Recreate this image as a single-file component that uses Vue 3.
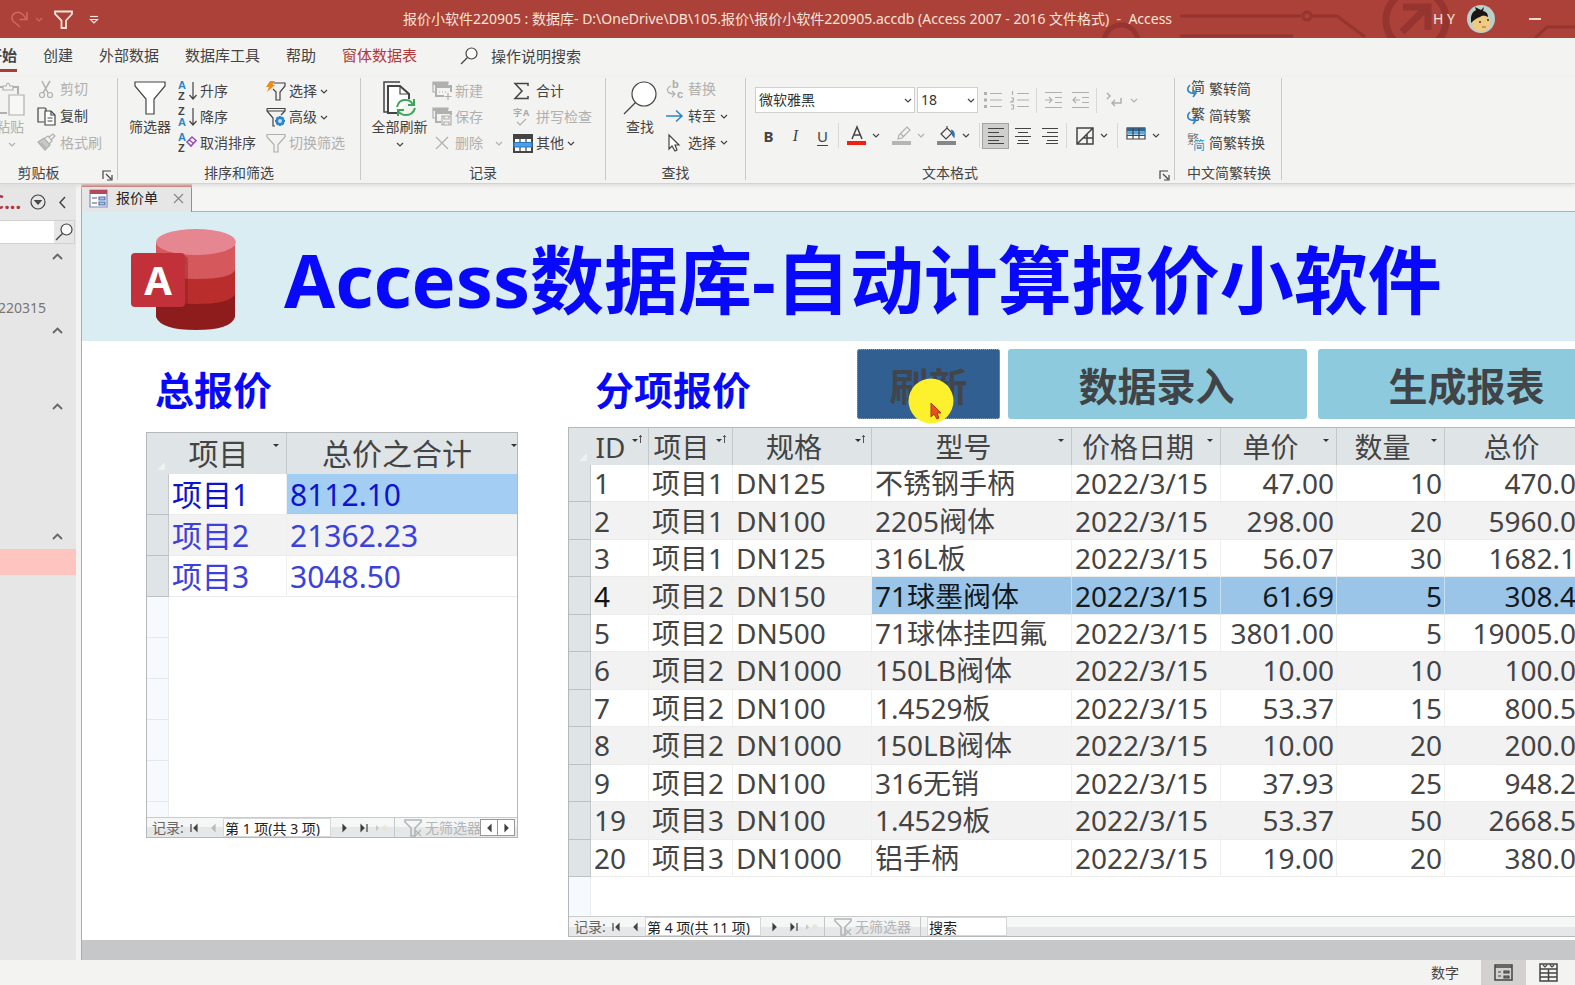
<script setup>
import { h } from 'vue'

const art = {
  redoArrow: '<path d="M9 17 L2 11 Q-1 6 4 3 Q10 0 15 9 M16 2 V9.500 H8.500" stroke-width="1.500"/>',
  funnel: '<path d="M1 1.500 H19 V4 L12 11.500 V19 H8 V11.500 L1 4 Z" />',
  quickFunnel: '<path d="M1 1.500 H18 V4 L12 10.500 V18 H7.500 V10.500 L1 4 Z" stroke-width="1.800"/>',
  more: '<path d="M1 1.500 H9" /><path d="M1.500 4.500 L5 8 L8.500 4.500 Z" />',
  chevron: '<path d="M1 1 L4 4 L7 1" />',
  caretUp: '<path d="M1 6 L5.500 1.500 L10 6" stroke-width="1.800"/>',
  back: '<path d="M6 1 L1 6.500 L6 12" stroke-width="1.500"/>',
  circleDown: '<circle cx="8" cy="8" r="7" fill="none"/><path d="M5 6.500 H11 L8 10 Z" fill="#555"/>',
  search: '<circle cx="11.500" cy="6.500" r="5.500" fill="#fafafa"/><path d="M7.500 10.500 L1 17"/>',
  bigSearch: '<circle cx="21" cy="13" r="12" fill="#fff"/><path d="M12.500 21.500 L1 33"/>',
  paste: '<path d="M11 32 H1 V6 H7 M17 6 H22 V13" stroke-width="2"/><path d="M7 9 V5 H10 Q12 -1 14 5 H17 V9 Z"/><path d="M13 14 H28 V34 H13 Z" fill="#f7f7f6"/>',
  scissors: '<path d="M5 1 L11 13 M13 1 L6 13" stroke-width="1.500"/><circle cx="5" cy="15" r="2.500" fill="none"/><circle cx="13" cy="15" r="2.500" fill="none"/>',
  copy: '<path d="M7 15 H1 V1 H8 L9 2 V4"/><path d="M8 4 H14 L18 8 V18 H8 Z" fill="#fff"/><path d="M14 4 V8 H18 M10.500 11 H15.500 M10.500 14 H15.500"/>',
  brush: '<path d="M1 9 L7 5 L13 12 L8 17 Z" fill="#c9c9c7"/><path d="M8 5 L11 3 L15 8 L12 11 M12 4 L16 1 L18 3 L14 7 M4 10 L9 15"/>',
  bigFunnel: '<path d="M1 1 H31 V5 L20 18 V33 H12 V18 L1 5 Z" fill="#fff"/>',
  asc: '<text x="0" y="8" class="ic" fill="#2a86c8">A</text><text x="0" y="19" class="ic" fill="#444">Z</text><path d="M15 1 V18 M11.500 14 L15 18 L18.500 14"/>',
  desc: '<text x="0" y="8" class="ic" fill="#444">Z</text><text x="0" y="19" class="ic" fill="#2a86c8">A</text><path d="M15 1 V18 M11.500 14 L15 18 L18.500 14"/>',
  clear: '<text x="0" y="8" class="ic" fill="#2a86c8">A</text><text x="0" y="19" class="ic" fill="#444">Z</text><path d="M9 9 L14 4 L18 7.500 L13 13 Z M11.500 7 L15.500 10.500" stroke="#9b4fb5" fill="#fff" stroke-width="1.600"/>',
  selFilter: '<path d="M8 2 H19 V5 L14 11 V19 H10 V11 L7 8"/><path d="M4 0 H9 L6.500 4 H9 L1 11 L3 6 H0 Z" fill="#f08a1c" stroke="none"/>',
  advFilter: '<path d="M14 9 V19 M9 14 H19 M10.500 10.500 L17.500 17.500 M17.500 10.500 L10.500 17.500" stroke="#2a86c8" stroke-width="2.500"/><circle cx="14" cy="14" r="3" fill="#bfe0f5" stroke="#2a86c8" stroke-width="2"/><path d="M1 1.500 H19 V4 L15 8 M1 1.500 V4 L7 11 V19 H9 M1 4 H19"/>',
  refresh: '<path d="M6 31 H1 V1 H17" stroke-width="1.500"/><path d="M14 32 H5 V5 H17 L26 13 V18" stroke-width="2" fill="#fff"/><path d="M17 5 V13 H26"/><path d="M14 26 Q16 18 23 19 Q28 19 30 24 M31 18 V24 H25 M32 27 Q30 34 23 34 Q18 34 15 30 M15 35 V29 H21" stroke="#3fa45b" stroke-width="2" fill="none"/>',
  newRec: '<path d="M3 11 H1 V1 H16 V3" /><path d="M1 2.500 H16" stroke-width="3"/><path d="M12 15 H4 V5 H19 V11 M4 6 H19" stroke-width="2"/><path d="M7 11 H8 M10 11 H11 M13 11 H14 M16 12 V19 M12.500 15.500 H19.500"/>',
  saveRec: '<path d="M3 11 H1 V1 H16 V3"/><path d="M1 2.500 H16" stroke-width="3"/><path d="M9 15 H4 V5 H19 V8 M4 6 H19" stroke-width="2"/><path d="M10 9 H19 V18 H10 Z M12 9 V12 H17 V9 M12 18 V15 H17 V18"/>',
  cross: '<path d="M1 1 L13 13 M13 1 L1 13"/>',
  smallCross: '<path d="M1 1 L10 10 M10 1 L1 10"/>',
  sigma: '<path d="M15 4 V1.500 H2 L9 9 L2 16.500 H15 V14" stroke-width="1.500"/>',
  spell: '<text x="0" y="8" class="ic sm" fill="#aaa">字</text><text x="10" y="8" class="ic sm" fill="#aaa">A</text><path d="M4 14 L7 17 L13 11"/>',
  other: '<path d="M1 1 H19 V18 H1 Z" fill="#fff" stroke-width="2"/><path d="M1 3 H19" stroke-width="4"/><path d="M7 5 V18 M13 5 V18"/><path d="M1 8.500 H19 V13 H1 Z" fill="#4aa0ea" stroke="#2878c0"/>',
  replace: '<text x="6" y="8" class="ic" fill="#aaa">b</text><text x="11" y="18" class="ic" fill="#aaa">c</text><path d="M5 6 Q0 8 2 12 Q4 14 8 14 M6 11 L9 14 L6 17"/>',
  goto: '<path d="M0 8 H16 M10 2.500 L16 8 L10 13.500" stroke="#2a86c8" stroke-width="1.500"/>',
  pointer: '<path d="M3 1 V15 L6 12 L9 17 L11 16 L9 11 H13 Z" fill="#fff"/>',
  bullets: '<path d="M6 2.500 H18 M6 9 H18 M6 15.500 H18"/><path d="M0 2.500 H3 M0 9 H3 M0 15.500 H3" stroke-width="3"/>',
  numbers: '<path d="M6 2.500 H18 M6 9 H18 M6 15.500 H18 M1.500 0 V4 M0 7 H2.500 V9 L0 11 H3 M0 14 H2.500 V18 H0"/>',
  indent: '<path d="M1 1.500 H18 M11 6.500 H18 M11 11.500 H18 M1 16.500 H18 M1 9 H8 M5 6 L8 9 L5 12"/>',
  outdent: '<path d="M1 1.500 H18 M11 6.500 H18 M11 11.500 H18 M1 16.500 H18 M2 9 H9 M5 6 L2 9 L5 12"/>',
  direction: '<path d="M1 2 L4 5 L1 8 M15 7 V12 H6 M9 9 L6 12 L9 15" stroke-width="1.500"/>',
  fontColor: '<path d="M5 13 L10 1 L15 13 M7 9 H13" stroke-width="1.500"/><path d="M0 17 H19" stroke="#f0200f" stroke-width="4"/>',
  highlight: '<path d="M6 13 L7 9 L15 1 L18 4 L10 12 Z M9 8 L12 11"/><path d="M0 17 H19" stroke="#b5b5b3" stroke-width="4"/>',
  bucket: '<path d="M4 8 L10 2 L15 7 L9 13 Z M10 2 V0"/><path d="M14 4 Q18 5 17 11 Q15 9 15 7" fill="#2a70b8" stroke="#2a70b8"/><path d="M0 17 H19" stroke="#85888a" stroke-width="4"/>',
  alignL: '<path d="M0 1.500 H16 M0 5.500 H11 M0 9.500 H16 M0 13.500 H11 M0 16.500 H16"/>',
  alignC: '<path d="M0 1.500 H16 M3 5.500 H13 M0 9.500 H16 M3 13.500 H13 M2 16.500 H14"/>',
  alignR: '<path d="M0 1.500 H16 M5 5.500 H16 M0 9.500 H16 M5 13.500 H16 M4 16.500 H16"/>',
  lines: '<path d="M1 1 H17 V17 H1 Z M1 17 L17 1 M11 7 V17 M7 11 H17" stroke-width="1.500"/>',
  altRow: '<path d="M1 1 H19 V12 H1 Z" fill="#fff"/><path d="M1 2.500 H19" stroke="#33658c" stroke-width="4"/><path d="M1 6 H19" stroke="#55a8e8" stroke-width="3"/><path d="M7 1 V12 M13 1 V12 M1 8.500 H19"/>',
  launcher: '<path d="M1 9 V1 H9 M4 4 L9 9 M10 5 V10 H5"/>',
  toSimple: '<text x="4" y="12" class="ic cj" fill="#444">简</text><path d="M3 5 Q-1 9 2 12 Q5 14 9 13 M6 10 L9 13 L6 17" stroke="#2a86c8" stroke-width="1.600"/>',
  toTrad: '<text x="4" y="12" class="ic cj" fill="#444">繁</text><path d="M3 5 Q-1 9 2 12 Q5 14 9 13 M6 10 L9 13 L6 17" stroke="#2a86c8" stroke-width="1.600"/>',
  convert: '<text x="0" y="10" class="ic cs" fill="#777">繁</text><path d="M6 5 H18 V19 H6 Z" fill="#f3f3f2" stroke="none"/><text x="6" y="16" class="ic cs" fill="#2a96c8">简</text>',
  form: '<path d="M1 1 H18 V18 H1 Z" fill="#fff" stroke="#7890b5"/><path d="M1 3 H18" stroke="#b4475a" stroke-width="4"/><path d="M3 9 H8 M3 14 H8" stroke="#555"/><path d="M10 8 H16 V11 H10 Z M10 13 H16 V16 H10 Z" fill="#a9c0e6" stroke="#5575b0"/>',
  first: '<path d="M1 1 V9" /><path d="M7 2 V8 L4 5 Z" fill="#444"/>',
  prev: '<path d="M4 2 V8 L1 5 Z" fill="currentColor"/>',
  next: '<path d="M1 2 V8 L4 5 Z" fill="#333"/>',
  last: '<path d="M1 2 V8 L4 5 Z" fill="#333"/><path d="M7 1 V9"/>',
  fresh: '<path d="M1 2 V8 L4 5 Z" fill="#c5c7c8" stroke="none"/><path d="M10 2 V8 M7 5 H13 M8 3 L12 7 M12 3 L8 7" stroke="#ece4d2"/>',
  noFilter: '<path d="M1 1 H17 V3 L11 9 V17 H7 V9 L1 3 Z" stroke-width="1.600"/><path d="M11 11 L17 17 M17 11 L11 17"/>',
  viewForm: '<path d="M1 1 H18 V16 H1 Z M1 3 H18" stroke-width="1.500"/><path d="M4 8 H7 M4 12 H7"/><path d="M10 7 H15 V9 H10 Z M10 12 H15 V14 H10 Z" fill="#777"/>',
  viewSheet: '<path d="M1 1 H18 V18 H1 Z M1 6 H18 M1 10 H18 M1 14 H18 M9.500 6 V18" stroke-width="1.500"/><path d="M4 2 L6 4 L8 2 M11 2 L13 4 L15 2"/>'
}

const Icon = (p) => h('svg', {
  width: p.w, height: p.h, viewBox: `0 0 ${p.w} ${p.h}`, fill: 'none', stroke: 'currentColor',
  'stroke-width': 1.2, 'aria-hidden': 'true', class: 'icon', innerHTML: art[p.n]
})
Icon.props = ['n', 'w', 'h']

const tabs = ['创建', '外部数据', '数据库工具', '帮助']
const totals = [['项目1', '8112.10'], ['项目2', '21362.23'], ['项目3', '3048.50']]
const columns = [
  { name: 'ID', cls: 'c-id', sorted: true }, { name: '项目', cls: 'c-item', sorted: true },
  { name: '规格', cls: 'c-spec', sorted: true }, { name: '型号', cls: 'c-model' },
  { name: '价格日期', cls: 'c-date' }, { name: '单价', cls: 'c-price' },
  { name: '数量', cls: 'c-qty' }, { name: '总价', cls: 'c-total' }
]
const D = '2022/3/15'
const rows = [
  [1, '项目1', 'DN125', '不锈钢手柄', D, '47.00', 10, '470.00'],
  [2, '项目1', 'DN100', '2205阀体', D, '298.00', 20, '5960.00'],
  [3, '项目1', 'DN125', '316L板', D, '56.07', 30, '1682.10'],
  [4, '项目2', 'DN150', '71球墨阀体', D, '61.69', 5, '308.45'],
  [5, '项目2', 'DN500', '71球体挂四氟', D, '3801.00', 5, '19005.00'],
  [6, '项目2', 'DN1000', '150LB阀体', D, '10.00', 10, '100.00'],
  [7, '项目2', 'DN100', '1.4529板', D, '53.37', 15, '800.55'],
  [8, '项目2', 'DN1000', '150LB阀体', D, '10.00', 20, '200.00'],
  [9, '项目2', 'DN100', '316无销', D, '37.93', 25, '948.25'],
  [19, '项目3', 'DN100', '1.4529板', D, '53.37', 50, '2668.50'],
  [20, '项目3', 'DN1000', '铝手柄', D, '19.00', 20, '380.00']
]
</script>

<template>
  <div class="app">
    <header class="titlebar">
      <svg class="circuit" width="500" height="38" viewBox="0 0 500 38" fill="none" stroke="#96352f" stroke-width="4" aria-hidden="true">
        <path d="M105 16 H226 M237 16 H262 L290 37 M105 36 H218" stroke-width="3" />
        <circle cx="232" cy="16" r="4" stroke-width="3" />
        <circle cx="341" cy="20" r="30" stroke-width="7" />
        <path d="M327 32 L350 9 M328 7 H353 V30" stroke-width="7" />
        <circle cx="46" cy="42" r="17" stroke-width="5" />
        <path d="M460 38 L472 27 H500" stroke-width="3" />
      </svg>
      <div class="quick">
        <button class="dim" aria-label="重做"><Icon n="redoArrow" w="18" h="18" /></button>
        <button class="dim" aria-label="重做选项"><Icon n="chevron" w="8" h="5" /></button>
        <button class="qf" aria-label="筛选"><Icon n="quickFunnel" w="19" h="19" /></button>
        <button aria-label="自定义快速访问工具栏"><Icon n="more" w="10" h="9" /></button>
      </div>
      <div class="doc-title">报价小软件220905 : 数据库- D:\OneDrive\DB\105.报价\报价小软件220905.accdb (Access 2007 - 2016 文件格式)&nbsp; -&nbsp; Access</div>
      <div class="account">
        <span>H Y</span>
        <svg width="28" height="28" viewBox="0 0 28 28" aria-hidden="true">
          <circle cx="14" cy="14" r="14" fill="#b9cfc9" />
          <path d="M5 15 Q8 8 20 11 Q26 17 22 23 Q14 30 6 23 Z" fill="#f0c983" />
          <path d="M4 16 Q3 8 9 5 L8 2 L14 5 L17 2 L16 6 Q21 7 21 12 Q16 9 13 12 Q9 13 4 18" fill="#191615" />
          <circle cx="13" cy="17" r="1" fill="#4a3020" /><circle cx="21" cy="15" r="1" fill="#4a3020" />
          <path d="M15 22 H19" stroke="#a86038" />
        </svg>
        <button class="minimize" aria-label="最小化"></button>
      </div>
    </header>

    <nav class="tabs">
      <a href="#" class="active">开始</a>
      <a v-for="t in tabs" :key="t" href="#">{{ t }}</a>
      <a href="#" class="context">窗体数据表</a>
      <button class="tell"><Icon n="search" w="18" h="18" />操作说明搜索</button>
    </nav>

    <section class="ribbon">
      <div class="group g-clip">
        <div class="tools">
          <button class="big off"><Icon n="paste" w="30" h="36" /><span>粘贴</span><Icon n="chevron" w="8" h="5" /></button>
          <div class="col">
            <button class="off"><Icon n="scissors" w="19" h="19" />剪切</button>
            <button><Icon n="copy" w="19" h="19" />复制</button>
            <button class="off"><Icon n="brush" w="19" h="19" />格式刷</button>
          </div>
        </div>
        <h2>剪贴板</h2>
        <button class="launch" aria-label="剪贴板选项"><Icon n="launcher" w="11" h="11" /></button>
      </div>
      <div class="group g-sort">
        <div class="tools low">
          <button class="big"><Icon n="bigFunnel" w="32" h="36" /><span>筛选器</span></button>
          <div class="col">
            <button><Icon n="asc" w="19" h="20" />升序</button>
            <button><Icon n="desc" w="19" h="20" />降序</button>
            <button><Icon n="clear" w="19" h="20" />取消排序</button>
          </div>
          <div class="col">
            <button><Icon n="selFilter" w="20" h="20" />选择<Icon n="chevron" w="8" h="5" /></button>
            <button><Icon n="advFilter" w="20" h="20" />高级<Icon n="chevron" w="8" h="5" /></button>
            <button class="off"><Icon n="funnel" w="20" h="20" />切换筛选</button>
          </div>
        </div>
        <h2>排序和筛选</h2>
      </div>
      <div class="group g-rec">
        <div class="tools low">
          <button class="big"><Icon n="refresh" w="34" h="36" /><span>全部刷新</span><Icon n="chevron" w="8" h="5" /></button>
          <div class="col">
            <button class="off"><Icon n="newRec" w="20" h="20" />新建</button>
            <button class="off"><Icon n="saveRec" w="20" h="20" />保存</button>
            <button class="off wide"><Icon n="cross" w="14" h="14" />删除<Icon n="chevron" w="8" h="5" /></button>
          </div>
          <div class="col">
            <button><Icon n="sigma" w="20" h="18" />合计</button>
            <button class="off"><Icon n="spell" w="20" h="18" />拼写检查</button>
            <button><Icon n="other" w="20" h="19" />其他<Icon n="chevron" w="8" h="5" /></button>
          </div>
        </div>
        <h2>记录</h2>
      </div>
      <div class="group g-find">
        <div class="tools">
          <button class="big"><Icon n="bigSearch" w="34" h="36" /><span>查找</span></button>
          <div class="col">
            <button class="off"><Icon n="replace" w="18" h="18" />替换</button>
            <button><Icon n="goto" w="18" h="16" />转至<Icon n="chevron" w="8" h="5" /></button>
            <button><Icon n="pointer" w="18" h="18" />选择<Icon n="chevron" w="8" h="5" /></button>
          </div>
        </div>
        <h2>查找</h2>
      </div>
      <div class="group g-text">
        <div class="format">
          <div class="line one">
            <span class="pick font"><select aria-label="字体"><option>微软雅黑</option></select><Icon n="chevron" w="8" h="5" /></span>
            <span class="pick size"><select aria-label="字号"><option>18</option></select><Icon n="chevron" w="8" h="5" /></span>
            <button class="t off" aria-label="项目符号"><Icon n="bullets" w="18" h="18" /></button>
            <button class="t off" aria-label="编号"><Icon n="numbers" w="18" h="18" /></button>
            <i class="sep"></i>
            <button class="t off" aria-label="增加缩进"><Icon n="indent" w="18" h="18" /></button>
            <button class="t off" aria-label="减少缩进"><Icon n="outdent" w="18" h="18" /></button>
            <i class="sep"></i>
            <button class="t drop off" aria-label="文字方向"><Icon n="direction" w="18" h="18" /><Icon n="chevron" w="8" h="5" /></button>
          </div>
          <div class="line two">
            <button class="t b" aria-label="加粗">B</button>
            <button class="t it" aria-label="倾斜">I</button>
            <button class="t u" aria-label="下划线">U</button>
            <i class="sep tight"></i>
            <button class="t drop" aria-label="字体颜色"><Icon n="fontColor" w="19" h="19" /><Icon n="chevron" w="8" h="5" /></button>
            <button class="t drop off" aria-label="突出显示"><Icon n="highlight" w="19" h="19" /><Icon n="chevron" w="8" h="5" /></button>
            <button class="t drop" aria-label="背景色"><Icon n="bucket" w="19" h="19" /><Icon n="chevron" w="8" h="5" /></button>
            <i class="sep"></i>
            <button class="t on" aria-label="左对齐"><Icon n="alignL" w="16" h="18" /></button>
            <button class="t" aria-label="居中"><Icon n="alignC" w="16" h="18" /></button>
            <button class="t" aria-label="右对齐"><Icon n="alignR" w="16" h="18" /></button>
            <i class="sep"></i>
            <button class="t drop" aria-label="网格线"><Icon n="lines" w="18" h="18" /><Icon n="chevron" w="8" h="5" /></button>
            <i class="sep"></i>
            <button class="t drop" aria-label="可选行颜色"><Icon n="altRow" w="20" h="18" /><Icon n="chevron" w="8" h="5" /></button>
          </div>
        </div>
        <h2>文本格式</h2>
        <button class="launch" aria-label="文本格式选项"><Icon n="launcher" w="11" h="11" /></button>
      </div>
      <div class="group g-conv">
        <div class="tools">
          <div class="col">
            <button><Icon n="toSimple" w="18" h="18" />繁转简</button>
            <button><Icon n="toTrad" w="18" h="18" />简转繁</button>
            <button><Icon n="convert" w="18" h="18" />简繁转换</button>
          </div>
        </div>
        <h2>中文简繁转换</h2>
      </div>
    </section>

    <div class="workspace">
      <aside class="side">
        <div class="side-head">
          <b>C...</b>
          <button aria-label="导航选项"><Icon n="circleDown" w="16" h="16" /></button>
          <button class="fold" aria-label="折叠导航"><Icon n="back" w="7" h="13" /></button>
        </div>
        <div class="side-search"><input type="text" aria-label="搜索对象"><button aria-label="搜索"><Icon n="search" w="18" h="18" /></button></div>
        <button class="cat a" aria-label="折叠表"><Icon n="caretUp" w="11" h="7" /></button>
        <a href="#" class="obj">220315</a>
        <button class="cat b" aria-label="折叠查询"><Icon n="caretUp" w="11" h="7" /></button>
        <button class="cat c" aria-label="折叠窗体"><Icon n="caretUp" w="11" h="7" /></button>
        <button class="cat d" aria-label="折叠报表"><Icon n="caretUp" w="11" h="7" /></button>
        <a href="#" class="current" aria-label="报价单"></a>
      </aside>

      <main class="main">
        <div class="doc-tabs">
          <div class="doc-tab"><Icon n="form" w="19" h="19" /><span>报价单</span><button class="close" aria-label="关闭"><Icon n="smallCross" w="11" h="11" /></button></div>
        </div>
        <div class="banner">
          <svg width="106" height="102" viewBox="0 0 106 102" aria-hidden="true">
            <path d="M25 14 V88 Q30 101 65 101 Q100 101 104 88 V14 Z" fill="#8e1c1c" />
            <path d="M25 14 V62 Q30 75 65 75 Q100 75 104 65 V14 Z" fill="#b92d2d" />
            <path d="M25 14 V37 Q30 50 65 50 Q100 50 104 41 V14 Z" fill="#d5595c" />
            <ellipse cx="65" cy="13" rx="40" ry="13" fill="#e68690" />
            <path d="M25 27 H53 Q57 27 57 31 V78 Q57 82 53 82 H25 Z" fill="#7e2024" opacity=".4" />
            <rect x="0" y="24" width="54" height="54" rx="4" fill="#c2313a" />
            <text x="27" y="66" text-anchor="middle" class="logo-a" fill="#fff">A</text>
          </svg>
          <h1>Access数据库-自动计算报价小软件</h1>
        </div>

        <div class="form">
          <section class="left">
            <h3>总报价</h3>
            <div class="sheet s1">
              <table>
                <thead><tr><th class="sel"></th><th class="c1">项目<i class="arrow"></i></th><th>总价之合计<i class="arrow edge"></i></th></tr></thead>
                <tbody>
                  <tr v-for="(r, i) in totals" :key="r[0]" :class="{ picked: i === 0 }"><td class="sel"></td><td>{{ r[0] }}</td><td>{{ r[1] }}</td></tr>
                </tbody>
              </table>
              <div class="blank"><span v-for="n in 6" :key="n"></span></div>
              <div class="recnav">
                <label for="rec1">记录:</label>
                <button aria-label="第一条"><Icon n="first" w="8" h="10" /></button>
                <button class="faint" aria-label="上一条"><Icon n="prev" w="5" h="10" /></button>
                <input id="rec1" value="第 1 项(共 3 项)">
                <button aria-label="下一条"><Icon n="next" w="5" h="10" /></button>
                <button aria-label="最后一条"><Icon n="last" w="8" h="10" /></button>
                <button class="fresh" aria-label="新记录"><Icon n="fresh" w="14" h="10" /></button>
                <button class="nf"><Icon n="noFilter" w="18" h="18" />无筛选器</button>
                <button class="scroll" aria-label="向左滚动"><Icon n="prev" w="5" h="10" /></button>
                <button class="scroll" aria-label="向右滚动"><Icon n="next" w="5" h="10" /></button>
              </div>
            </div>
          </section>

          <section class="right">
            <div class="bar">
              <h3>分项报价</h3>
              <button class="act refresh">刷新
                <svg class="cursor" width="46" height="46" viewBox="0 0 46 46" aria-hidden="true">
                  <circle cx="23" cy="23" r="22.500" fill="#fdf02c" />
                  <path d="M23 25 V39 L26 36 L29 41 L31 40 L29 35 H33 Z" fill="#e8501c" stroke="#a8381a" />
                </svg>
              </button>
              <button class="act">数据录入</button>
              <button class="act last">生成报表</button>
            </div>
            <div class="sheet s2">
              <table>
                <thead><tr><th class="sel"></th><th v-for="c in columns" :key="c.name" :class="c.cls">{{ c.name }}<i class="arrow" :class="{ sorted: c.sorted }"></i></th></tr></thead>
                <tbody>
                  <tr v-for="r in rows" :key="r[0]" :class="{ picked: r[0] === 4 }"><td class="sel"></td><td v-for="(v, j) in r" :key="j" :class="{ num: j > 4 }">{{ v }}</td></tr>
                </tbody>
              </table>
              <div class="blank"></div>
              <div class="recnav">
                <label for="rec2">记录:</label>
                <button aria-label="第一条"><Icon n="first" w="8" h="10" /></button>
                <button aria-label="上一条"><Icon n="prev" w="5" h="10" /></button>
                <input id="rec2" value="第 4 项(共 11 项)">
                <button aria-label="下一条"><Icon n="next" w="5" h="10" /></button>
                <button aria-label="最后一条"><Icon n="last" w="8" h="10" /></button>
                <button class="fresh" aria-label="新记录"><Icon n="fresh" w="14" h="10" /></button>
                <button class="nf"><Icon n="noFilter" w="18" h="18" />无筛选器</button>
                <input class="find" aria-label="搜索" value="搜索">
              </div>
            </div>
          </section>
        </div>
        <div class="foot"></div>
      </main>
    </div>

    <footer class="status">
      <span>数字</span>
      <button class="on" aria-label="窗体视图"><Icon n="viewForm" w="19" h="18" /></button>
      <button aria-label="数据表视图"><Icon n="viewSheet" w="19" h="19" /></button>
    </footer>
  </div>
</template>

<style>
body { margin: 0; overflow: hidden; }
svg .ic { font: bold 11px "Liberation Sans", sans-serif; stroke: none; }
svg .ic.sm { font-size: 9px; font-family: "Noto Sans", "Noto Sans CJK SC", sans-serif; }
svg .ic.cj { font: 14px "Noto Sans CJK SC", sans-serif; }
svg .ic.cs { font: 12px "Noto Sans CJK SC", sans-serif; }
</style>

<style scoped>
* { box-sizing: border-box; }
.app { display: flex; flex-direction: column; height: 100vh; overflow: hidden; background: #f3f3f2; color: #444; font: 14px/20px "Noto Sans", "Noto Sans CJK SC", sans-serif; }
button { font: inherit; color: inherit; background: none; border: 0; padding: 0; display: flex; align-items: center; white-space: nowrap; }
a { color: inherit; text-decoration: none; }
h1, h2, h3 { margin: 0; }
.icon { flex: none; display: block; overflow: visible; }

.titlebar { position: relative; display: grid; grid-template-columns: 1fr auto 1fr; align-items: center; flex: none; height: 38px; background: #ab4139; color: #f8e4d8; overflow: hidden; }
.circuit { position: absolute; right: 0; top: 0; }
.quick { display: flex; align-items: center; padding-left: 11px; gap: 6px; }
.quick .dim { color: #d0695d; }
.quick .qf { padding: 0 10px 0 5px; }
.doc-title { position: relative; white-space: nowrap; }
.account { position: relative; display: flex; align-items: center; justify-content: flex-end; gap: 12px; padding-right: 34px; }
.minimize { width: 12px; height: 2px; background: #f0d5cb; margin-left: 22px; }

.tabs { display: flex; align-items: center; flex: none; height: 39px; gap: 26px; margin-left: -13px; font-size: 15px; }
.tabs a { height: 33px; line-height: 32px; white-space: nowrap; margin-top: -4px; }
.tabs .active { font-weight: bold; border-bottom: 3px solid #a83e38; }
.tabs .context { color: #b23a36; }
.tell { gap: 13px; margin: -4px 0 0 17px; }

.ribbon { display: flex; flex: none; height: 107px; border-bottom: 1px solid #d3d3d2; box-shadow: 0 2px 4px #dededd; z-index: 1; }
.group { position: relative; flex: none; display: flex; flex-direction: column; height: 102px; margin-top: 1px; border-right: 1px solid #c9c9c8; }
.group h2 { font-size: 14px; font-weight: normal; line-height: 20px; text-align: center; margin-top: auto; margin-bottom: -3px; }
.tools { display: flex; height: 78px; }
.off { color: #b0b0ae; }
.big { flex-direction: column; gap: 1px; padding-top: 3px; height: 76px; }
.big span { line-height: 18px; }
.big span + .icon { margin-top: 5px; }
.col { display: flex; flex-direction: column; margin-top: -2px; }
.low .col { margin-top: 0; }
.col button { gap: 4px; height: 27px; }
.launch { position: absolute; right: 4px; bottom: -1px; }
.g-clip { width: 118px; }
.g-clip .tools { gap: 8px; margin-left: -4px; }
.g-clip .big { width: 33px; align-items: flex-start; }
.g-clip .big .icon:last-child { margin-left: 12px; }
.g-clip h2 { padding-right: 40px; }
.g-sort { width: 243px; }
.g-sort .big { width: 60px; padding-left: 4px; }
.g-sort .col button { gap: 3px; }
.g-sort .col + .col { margin-left: 10px; }
.g-rec { width: 245px; }
.g-rec .big { width: 71px; padding-left: 6px; }
.g-rec .col button { gap: 3px; }
.g-rec .col + .col { margin-left: 10px; }
.g-rec .col .wide { padding-left: 3px; gap: 6px; }
.g-rec .wide .icon:last-child { margin-left: 6px; }
.g-find { width: 140px; }
.g-find .big { width: 60px; padding-left: 8px; }
.g-text { width: 429px; }
.g-text h2 { padding-right: 20px; }
.g-conv { width: 107px; padding-left: 12px; }
.g-conv h2 { text-align: left; white-space: nowrap; }
.format { padding: 9px 0 0 9px; }
.line { display: flex; align-items: center; }
.one { height: 26px; }
.two { height: 27px; margin-top: 9px; }
.pick { position: relative; display: block; height: 26px; }
.pick select { appearance: none; width: 100%; height: 26px; border: 1px solid #cfcfce; border-radius: 0; background: #fff; padding: 0 3px; font: inherit; color: #333; }
.pick .icon { position: absolute; right: 3px; top: 11px; }
.font { width: 160px; margin-right: 2px; }
.size { width: 61px; margin-right: 1px; }
.t { flex: none; justify-content: center; width: 27px; height: 26px; }
.t.drop { width: 45px; gap: 6px; }
.sep { flex: none; width: 1px; height: 25px; background: #d8d8d7; margin: 0 2px 0 3px; }
.sep.tight { margin: 0 2px; }
.t.on { background: #cfcfcd; border: 1px solid #a3a3a1; }
.b { font-weight: bold; font-size: 15px; }
.it { font: italic 16px "Liberation Serif", serif; }
.u { text-decoration: underline; text-underline-offset: 3px; font-size: 15px; }

.workspace { display: flex; flex: 1; min-height: 0; }
.side { flex: none; width: 76px; background: #e6e6e6; overflow: hidden; }
.side-head { display: flex; align-items: center; height: 36px; gap: 15px; padding-right: 10px; justify-content: flex-end; }
.side-head b { color: #b23a36; font-size: 20px; margin-right: -6px; }
.side-search { display: flex; height: 24px; border: 1px solid #d0d0d0; border-left: 0; margin-right: 1px; }
.side-search input { flex: 1; min-width: 0; border: 0; background: #fff; padding: 0; }
.side-search button { padding: 0 1px; }
.side .fold { margin-left: -2px; }
.cat { width: 100%; justify-content: flex-end; height: 24px; padding-right: 13px; color: #666; }
.cat.a { margin-bottom: 30px; }
.obj { display: block; height: 20px; color: #777; margin-left: -2px; }
.cat.c { margin-top: 52px; }
.cat.d { margin-top: 106px; }
.current { display: block; height: 26px; background: #fec5c0; margin-top: 1px; }

.main { flex: 1; min-width: 0; display: flex; flex-direction: column; margin-left: 5px; border-left: 1px solid #a9adaf; background: #fff; overflow: hidden; }
.doc-tabs { flex: none; height: 28px; background: #f5f5f4; border-bottom: 1px solid #a8b5b5; }
.doc-tab { display: flex; align-items: center; width: 110px; height: 28px; background: #e6e6e6; border-top: 3px solid #c04a42; border-right: 1px solid #8d9292; padding: 0 0 3px 7px; color: #222; }
.doc-tab span { margin: 0 15px 0 8px; white-space: nowrap; }
.close { color: #888; }
.banner { display: flex; align-items: center; flex: none; height: 129px; background: #daedf3; padding: 7px 0 0 49px; }
.banner svg { margin-top: -1px; flex: none; }
.logo-a { font: bold 40px "Noto Sans", sans-serif; }
.banner h1 { color: #0808fb; font-size: 74px; line-height: 100px; white-space: nowrap; margin-left: 47px; }
.form { flex: 1; min-height: 0; display: flex; padding-left: 64px; gap: 50px; }
.form h3 { font-size: 39px; line-height: 50px; color: #0808fb; white-space: nowrap; }
.left { flex: none; width: 372px; }
.left h3 { height: 91px; padding: 24px 0 0 9px; }
.right { flex: 1; min-width: 0; display: flex; flex-direction: column; }
.bar { display: flex; height: 86px; padding-top: 8px; overflow: hidden; flex: none; }
.bar h3 { width: 289px; flex: none; padding: 16px 0 0 27px; }
.act { position: relative; flex: none; justify-content: center; width: 299px; height: 70px; border-radius: 3px; background: #8ecade; color: #404446; font-size: 39px; font-weight: bold; padding: 4px 2px 0 0; margin-right: 11px; }
.act.refresh { width: 143px; background: #315f92; color: #40464c; outline: 1px dotted #8aa5c2; outline-offset: -1px; margin-right: 8px; padding-right: 0; }
.cursor { position: absolute; left: 51px; top: 29px; }

.sheet { display: flex; flex-direction: column; border: 1px solid #b4b8ba; background: #fff; overflow: hidden; }
.s1 { height: 406px; font-size: 30px; }
.s2 { height: 510px; font-size: 28px; border-right: 0; flex: none; }
table { border-collapse: separate; border-spacing: 0; table-layout: fixed; line-height: 36px; flex: none; }
.s1 table { width: 370px; }
.s2 table { width: 1026px; height: 449px; }
th { position: relative; background: #dfe4e7; font-weight: normal; padding: 0; border-right: 1px solid #c3c8cb; white-space: nowrap; }
td { padding: 0 3px; border-right: 1px solid #efefed; border-bottom: 1px solid #ececea; white-space: nowrap; }
.s1 td { padding: 2px 3px 0; height: 41px; }
.s1 th { height: 41px; }
.s2 th { height: 37px; padding-right: 16px; }
.s2 .c-id, .s2 .c-item { padding-right: 18px; }
.sel { width: 22px; background: #dfe4e7; border-right: 1px solid #c3c8cb; border-bottom-color: #bcc1c4; }
th.sel { border-right: 0; }
th.sel::after { content: ""; position: absolute; right: 4px; bottom: 4px; border: 4px solid transparent; border-right-color: #eef1f2; border-bottom-color: #eef1f2; }
.s1 .c1 { width: 118px; padding-right: 18px; }
.s1 th:last-child, .s1 td:last-child { border-right: 0; }
.s1 th:last-child { padding-right: 10px; }
.c-id { width: 58px; } .c-item { width: 84px; } .c-spec { width: 139px; } .c-model { width: 200px; }
.c-date { width: 149px; } .c-price { width: 116px; } .c-qty { width: 108px; }
.arrow { position: absolute; right: 7px; top: 11px; border: 3px solid transparent; border-top: 3px solid #333; border-bottom: 0; }
.arrow.edge { right: 0; }
.arrow.sorted { right: 10px; }
.arrow.sorted::before { content: ""; position: absolute; left: 5px; top: -7px; width: 1px; height: 8px; background: #555; }
.arrow.sorted::after { content: ""; position: absolute; left: 4px; top: -6px; width: 3px; height: 1px; background: #555; }
tbody tr:nth-child(even) td:not(.sel) { background: #f2f2f2; }
.s1 tbody { color: #3c40dc; }
.s1 .picked { color: #0c14cf; }
.s1 .picked td:last-child { background: #a3cdf3; }
.s2 .picked td:nth-child(n+5) { background: #9ac5e8 !important; color: #111a22; border-right-color: #c5def0; }
.s2 .picked td:nth-child(2) { color: #111; }
.num { text-align: right; padding: 0 2px; }
.blank { flex: 1; min-height: 0; overflow: hidden; background: linear-gradient(to right, #f6fafe 21px, #e9edf0 21px, #e9edf0 22px, #fff 22px); }
.blank span { display: block; height: 41px; width: 22px; border-bottom: 1px solid #e3e8ec; }

.recnav { display: flex; align-items: center; flex: none; height: 20px; padding-left: 5px; border-top: 1px solid #c9cbcc; background: linear-gradient(#f5f6f6 50%, #e5e7e8 50%); font-size: 14px; line-height: 18px; color: #444; overflow: hidden; }
.recnav label { flex: none; width: 38px; color: #666; white-space: nowrap; }
.recnav button { flex: none; margin-right: 13px; }
.recnav .faint { color: #b8babc; }
.recnav button:has(+ input) { margin-right: 7px; }
.recnav .fresh { margin: 0 5px 0 -6px; }
.recnav input { flex: none; width: 108px; height: 19px; border: 1px solid #d5d7d8; background: #fff; padding: 0 0 0 1px; font: inherit; color: #222; margin-right: 11px; }
.s2 .recnav #rec2 { width: 116px; }
.recnav .nf { color: #b3b5b6; height: 19px; border-left: 1px solid #c5c7c8; padding-left: 9px; gap: 3px; margin-right: 0; }
.s2 .recnav .nf { border-right: 1px solid #c5c7c8; padding-right: 9px; margin-right: 6px; }
.s2 .recnav .find { width: 80px; }
.recnav .scroll { width: 18px; height: 17px; border: 1px solid #999; background: #fff; justify-content: center; margin: 0 -1px 0 0; }
.recnav .nf:has(+ .scroll) { flex: 1; min-width: 0; overflow: hidden; }
.s1 .recnav { padding-right: 3px; }
.foot { flex: none; height: 20px; background: #c5c7c9; }

.status { display: flex; align-items: center; justify-content: flex-end; flex: none; height: 25px; padding-right: 4px; }
.status button { width: 45px; height: 25px; justify-content: center; }
.status .on { background: #d3d1d0; margin-left: 22px; }
</style>
